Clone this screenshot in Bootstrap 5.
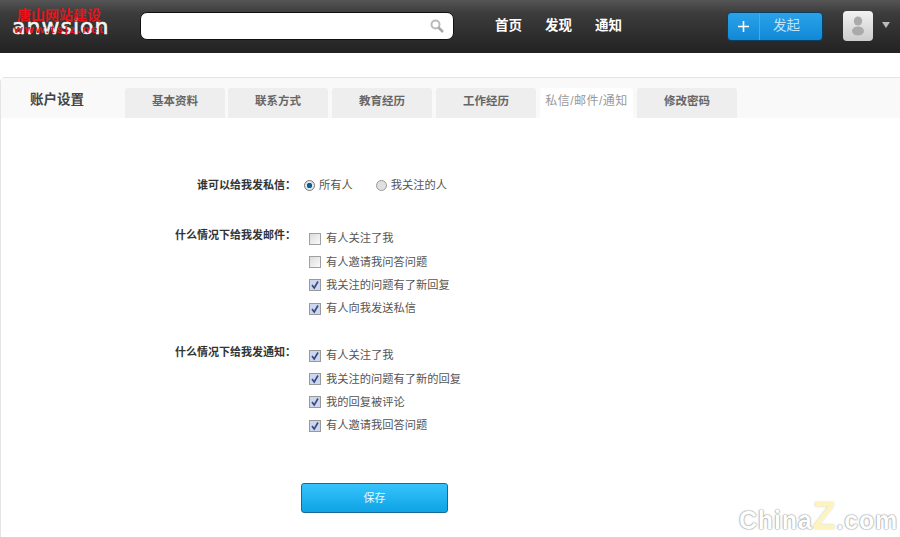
<!DOCTYPE html>
<html lang="zh"><head><meta charset="utf-8">
<link href="https://cdn.jsdelivr.net/npm/bootstrap@5.3.0/dist/css/bootstrap.min.css" rel="stylesheet">
<style>
html,body{height:537px;overflow:hidden;}
body{font-family:"Liberation Sans","Noto Sans CJK SC",sans-serif;font-size:11.25px;color:#555;background:#fff;position:relative;}
.topbar{height:53px;background:linear-gradient(#555,#3c3c3c 25%,#222);padding-left:12px;}
.logo-box{width:98px;height:53px;position:relative;flex:none;}
.logo-word{position:absolute;left:0;top:14px;font:400 22px/26px "DejaVu Sans",sans-serif;letter-spacing:1px;color:#f4f4f4;-webkit-text-stroke:.6px #f4f4f4;white-space:nowrap;}
.logo-red{position:absolute;left:5px;top:7px;color:#e8141c;font-size:14px;line-height:16px;font-weight:700;white-space:nowrap;}
.logo-url{position:absolute;left:2px;top:23px;color:#e8141c;font-size:11.5px;line-height:13px;font-weight:700;white-space:nowrap;letter-spacing:1.8px;}
.search-box{width:314px;height:28px;margin-left:30px;margin-bottom:2px;background:#fff;border:1px solid #111;border-radius:7px;}
.nav-links{margin-left:41px;gap:23px;margin-bottom:1px;}
.nav-links a{color:#fff;font-size:13.5px;font-weight:700;text-decoration:none;}
.publish{width:96px;height:29px;margin-left:105px;margin-bottom:1px;border:1px solid #0d3f63;border-radius:4px;background:linear-gradient(#2aa3ea,#1188d6);color:#bfe3fa;font-size:13.5px;padding:0;}
.publish-plus{width:32px;height:100%;border-right:1px solid #4fa9e0;}
.publish-text{flex:1;padding-right:9px;text-align:center;}
.avatar-box{width:30px;height:30px;margin-left:20px;margin-bottom:2px;border-radius:4px;background:linear-gradient(#f2f2f2,#ccc);}
.caret-down{width:0;height:0;margin-left:9px;margin-bottom:4px;border:4px solid transparent;border-top:6px solid #bbb;border-bottom:0;}
.panel{margin-top:24px;height:460px;border:1px solid #e4e4e4;border-bottom:0;border-right:0;border-radius:5px 0 0 0;}
.tabhead{height:40px;background:#f9f9f9;}
.tab-title{width:124px;padding-left:29px;font-size:13.5px;font-weight:700;color:#444;line-height:43px;}
.tab-list{gap:4px;margin-top:10px;}
.tab-item{width:100px;height:30px;background:#eee;border-radius:3px 3px 0 0;text-align:center;line-height:27px;color:#666;font-weight:700;font-size:11.5px;}
.tab-item.first{margin-right:-1px;}
.tab-item.on{width:93px;background:#fff;color:#999;font-weight:400;white-space:nowrap;font-size:12px;letter-spacing:.5px;}
.form-area{padding-top:59px;}
.form-row-x{display:flex;}
.label-x{width:295px;text-align:right;font-weight:700;color:#333;font-size:11px;line-height:16px;flex:none;}
.opts{padding-left:13px;}
.opt{display:flex;align-items:center;height:23.3px;color:#555;}
.mybox{width:12px;height:12px;border:1px solid #a0a0a0;background:linear-gradient(135deg,#dcdcdc,#fafafa);margin-right:5px;flex:none;display:flex;}
.mybox.chk{background:#cdd6ec;border-color:#999;}
.radio-row{display:flex;align-items:center;padding-left:8px;height:16px;}
.myradio{width:11px;height:11px;border-radius:50%;border:1px solid #999;background:#e0e0e0;margin-right:4px;flex:none;}
.myradio.chk{background:radial-gradient(circle,#0f5f92 0 2.5px,#dfe9f2 3px);border-color:#777;}
.myradio.second{margin-left:23px;}
.row-mail{margin-top:34px;}
.row-notice{margin-top:24px;}
.save-btn{width:147px;height:30px;margin-left:300px;margin-top:46px;display:block;border:1px solid #166a93;border-radius:3px;background:linear-gradient(#36c3fb,#0ea3e6);color:#eafaff;font-size:11px;padding:0;}
.wm{position:absolute;right:2px;bottom:1px;color:#fff;font:700 25px/32px "Liberation Sans",sans-serif;letter-spacing:.8px;text-shadow:0 0 2px #888,0 0 1px #888;white-space:nowrap;}
.wm b{color:#fff3bd;font-size:38px;line-height:32px;text-shadow:0 0 2px #bcd6ee;}
</style></head><body>
<div class="topbar d-flex align-items-center">
 <div class="logo-box"><div class="logo-word">anwsion</div><div class="logo-red">唐山网站建设</div><div class="logo-url">www.tsjz.net</div></div>
 <div class="search-box d-flex align-items-center justify-content-end pe-2"><svg width="16" height="16" viewBox="0 0 16 16"><circle cx="6.5" cy="6.5" r="4" fill="none" stroke="#bbb" stroke-width="2"/><path d="M9.5 9.5l4.5 4.5" stroke="#aaa" stroke-width="2.6"/></svg></div>
 <div class="nav-links d-flex"><a href="#">首页</a><a href="#">发现</a><a href="#">通知</a></div>
 <button class="publish btn d-flex align-items-center"><span class="publish-plus d-flex align-items-center justify-content-center"><svg width="11" height="11" viewBox="0 0 11 11"><path d="M5.5 0v11M0 5.5h11" stroke="#fff" stroke-width="1.6"/></svg></span><span class="publish-text">发起</span></button>
 <div class="avatar-box d-flex align-items-center justify-content-center"><svg width="14" height="20" viewBox="0 0 14 20"><ellipse cx="7" cy="5" rx="4.2" ry="4.6" fill="#aaa"/><ellipse cx="7" cy="15" rx="6" ry="4.5" fill="#aaa"/></svg></div>
 <div class="caret-down"></div>
</div>
<div class="panel">
 <div class="tabhead d-flex">
  <div class="tab-title">账户设置</div>
  <div class="tab-list d-flex">
   <div class="tab-item first">基本资料</div><div class="tab-item">联系方式</div><div class="tab-item">教育经历</div><div class="tab-item">工作经历</div><div class="tab-item on">私信/邮件/通知</div><div class="tab-item">修改密码</div>
  </div>
 </div>
 <div class="form-area">
  <div class="form-row-x"><div class="label-x">谁可以给我发私信：</div><div class="radio-row"><span class="myradio chk"></span>所有人<span class="myradio second"></span>我关注的人</div></div>
  <div class="form-row-x row-mail"><div class="label-x">什么情况下给我发邮件：</div><div class="opts">
   <div class="opt"><span class="mybox"></span>有人关注了我</div><div class="opt"><span class="mybox"></span>有人邀请我问答问题</div>
   <div class="opt"><span class="mybox chk"><svg width="10" height="10" viewBox="0 0 10 10"><path d="M2 5l2.2 3L8 1.5" fill="none" stroke="#33487d" stroke-width="1.6"/></svg></span>我关注的问题有了新回复</div>
   <div class="opt"><span class="mybox chk"><svg width="10" height="10" viewBox="0 0 10 10"><path d="M2 5l2.2 3L8 1.5" fill="none" stroke="#33487d" stroke-width="1.6"/></svg></span>有人向我发送私信</div></div></div>
  <div class="form-row-x row-notice"><div class="label-x">什么情况下给我发通知：</div><div class="opts">
   <div class="opt"><span class="mybox chk"><svg width="10" height="10" viewBox="0 0 10 10"><path d="M2 5l2.2 3L8 1.5" fill="none" stroke="#33487d" stroke-width="1.6"/></svg></span>有人关注了我</div>
   <div class="opt"><span class="mybox chk"><svg width="10" height="10" viewBox="0 0 10 10"><path d="M2 5l2.2 3L8 1.5" fill="none" stroke="#33487d" stroke-width="1.6"/></svg></span>我关注的问题有了新的回复</div>
   <div class="opt"><span class="mybox chk"><svg width="10" height="10" viewBox="0 0 10 10"><path d="M2 5l2.2 3L8 1.5" fill="none" stroke="#33487d" stroke-width="1.6"/></svg></span>我的回复被评论</div>
   <div class="opt"><span class="mybox chk"><svg width="10" height="10" viewBox="0 0 10 10"><path d="M2 5l2.2 3L8 1.5" fill="none" stroke="#33487d" stroke-width="1.6"/></svg></span>有人邀请我回答问题</div></div></div>
  <button class="save-btn btn">保存</button>
 </div>
</div>
<div class="wm">China<b>Z</b>.com</div>
</body></html>
